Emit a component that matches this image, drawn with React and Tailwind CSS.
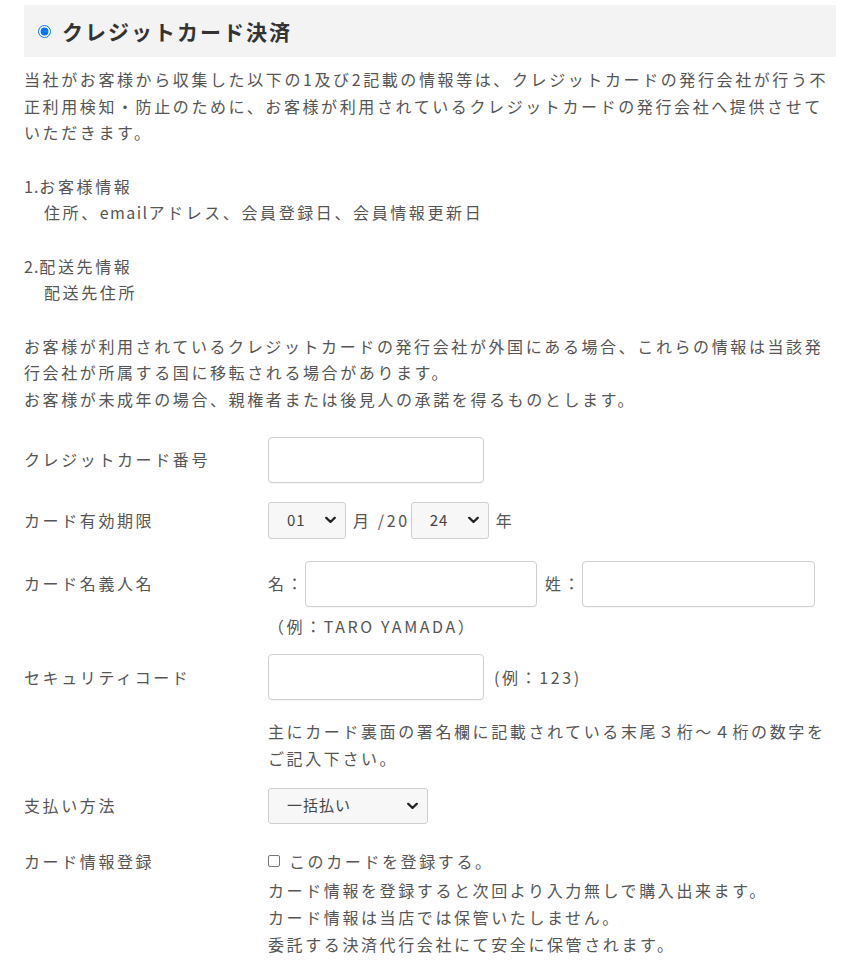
import React from "react";

const font = { fontFamily: '"Noto Sans CJK JP", "Noto Sans", sans-serif' };

function Chevron() {
  return (
    <svg width="11" height="7" viewBox="0 0 11 7" className="pointer-events-none absolute top-1/2 -translate-y-1/2 right-[10px]">
      <path d="M1.2 1.2 L5.5 5.5 L9.8 1.2" fill="none" stroke="#222" strokeWidth="2.3" strokeLinecap="round" strokeLinejoin="round" />
    </svg>
  );
}

function Select({ value, width }) {
  return (
    <div className={`relative ${width}`}>
      <select
        defaultValue={value}
        className="appearance-none w-full h-full bg-[#f7f7f7] border border-[#cfcfcf] rounded-[3px] pl-[18px] text-[15px] tracking-[1px] text-[#444] outline-none"
        style={font}
      >
        <option value={value}>{value}</option>
      </select>
      <Chevron />
    </div>
  );
}

function TextInput({ width }) {
  return (
    <input
      type="text"
      className={`${width} h-[46px] bg-white border border-[#cfcfcf] rounded-[4px] shadow-[0_1px_1px_rgba(0,0,0,0.04)] outline-none`}
    />
  );
}

export default function App() {
  return (
    <div className="w-[860px] min-h-[975px] bg-white px-[24px] text-[#555] text-[16px] leading-[26.67px] tracking-[2.6px]" style={font}>
      <div className="mt-[5px] h-[52px] bg-[#f3f3f3] flex items-center pl-[14px]">
        <input type="radio" checked readOnly className="w-[13px] h-[13px] m-0 accent-[#0075ff]" />
        <span className="ml-[11px] text-[21px] font-bold tracking-[2px] text-[#333]">クレジットカード決済</span>
      </div>

      <div className="mt-[9px]">
        <p>
          当社がお客様から収集した以下の1及び2記載の情報等は、クレジットカードの発行会社が行う不<br />
          正利用検知・防止のために、お客様が利用されているクレジットカードの発行会社へ提供させて<br />
          いただきます。
        </p>
        <p className="mt-[26.67px]"><span className="tracking-[1px]">1.</span>お客様情報</p>
        <p className="pl-[20px]">住所、<span className="tracking-[1.4px]">email</span>アドレス、会員登録日、会員情報更新日</p>
        <p className="mt-[26.67px]"><span className="tracking-[1px]">2.</span>配送先情報</p>
        <p className="pl-[20px]">配送先住所</p>
        <p className="mt-[26.67px]">
          お客様が利用されているクレジットカードの発行会社が外国にある場合、これらの情報は当該発<br />
          行会社が所属する国に移転される場合があります。<br />
          お客様が未成年の場合、親権者または後見人の承諾を得るものとします。
        </p>
      </div>

      <div className="mt-[24px]">
        <div className="flex items-center">
          <div className="w-[244px] shrink-0">クレジットカード番号</div>
          <TextInput width="w-[216px]" />
        </div>

        <div className="flex items-center mt-[19px]">
          <div className="w-[244px] shrink-0">カード有効期限</div>
          <Select value="01" width="w-[78px] h-[37px]" />
          <span className="ml-[7px]">月 /20</span>
          <div className="ml-[1px]">
            <Select value="24" width="w-[78px] h-[37px]" />
          </div>
          <span className="ml-[7px]">年</span>
        </div>

        <div className="flex items-start mt-[22px]">
          <div className="w-[244px] shrink-0 h-[46px] flex items-center">カード名義人名</div>
          <div className="flex flex-col">
            <div className="flex items-center">
              <span className="w-[37px]">名：</span>
              <TextInput width="w-[232px]" />
              <span className="ml-[8px] w-[37px]">姓：</span>
              <TextInput width="w-[233px]" />
            </div>
            <div className="mt-[6px]">（例：TARO YAMADA）</div>
          </div>
        </div>

        <div className="flex items-center mt-[15px]">
          <div className="w-[244px] shrink-0">セキュリティコード</div>
          <TextInput width="w-[216px]" />
          <span className="ml-[10px]">(例：123)</span>
        </div>

        <div className="pl-[244px] mt-[18px]">
          主にカード裏面の署名欄に記載されている末尾３桁〜４桁の数字を<br />
          ご記入下さい。
        </div>

        <div className="flex items-center mt-[16px]">
          <div className="w-[244px] shrink-0">支払い方法</div>
          <Select value="一括払い" width="w-[160px] h-[36px]" />
        </div>

        <div className="flex items-start mt-[24px]">
          <div className="w-[244px] shrink-0">カード情報登録</div>
          <div className="flex flex-col">
            <div className="flex items-center">
              <span className="inline-block w-[12px] h-[12px] border border-[#767676] rounded-[2px] bg-white mr-[9px]"></span>
              <span>このカードを登録する。</span>
            </div>
            <div className="mt-[3px]">
              カード情報を登録すると次回より入力無しで購入出来ます。<br />
              カード情報は当店では保管いたしません。<br />
              委託する決済代行会社にて安全に保管されます。
            </div>
          </div>
        </div>
      </div>
    </div>
  );
}
